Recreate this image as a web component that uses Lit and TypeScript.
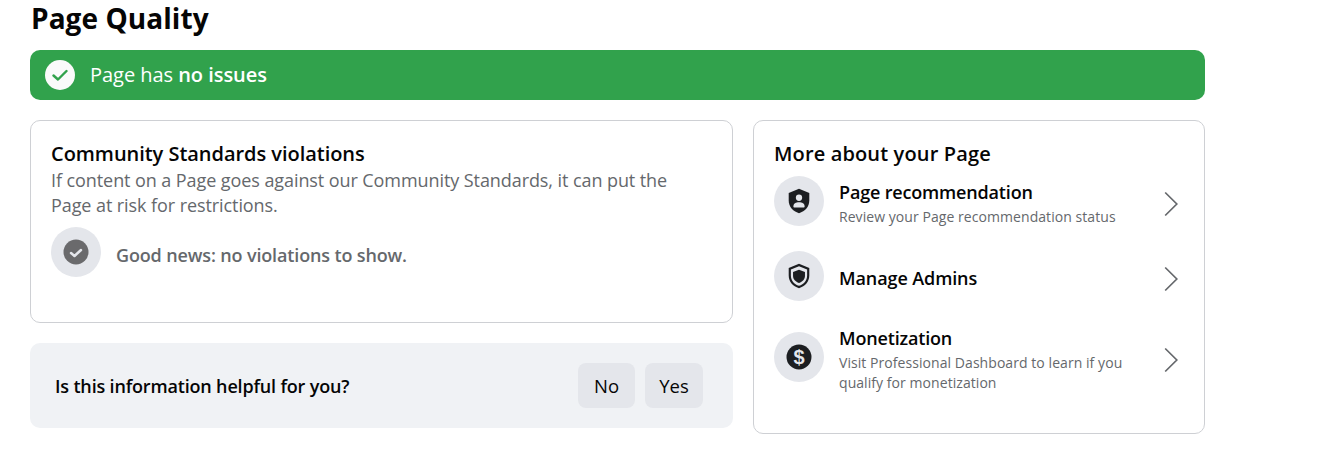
import { LitElement, html, css, svg } from "lit";
import { customElement } from "lit/decorators.js";

const chevron = html`<svg class="chev" width="14" height="26" viewBox="0 0 14 26"><path d="M1.200 1.500 L12.800 13 L1.200 24.500" fill="none" stroke="#65686c" stroke-width="1.700"/></svg>`;
const personShield = svg`<path fill="#1c1e21" d="M12 .8 21.500 4.500v7c0 5.600-3.800 9.900-9.500 11.700-5.700-1.800-9.500-6.100-9.500-11.700v-7z"/><circle cx="12" cy="9" r="2.900" fill="#e4e6eb"/><path fill="#e4e6eb" d="M6.800 17c0-2.600 2.300-3.800 5.200-3.800s5.200 1.200 5.200 3.800c0 .6-.4 1-1 1H7.800c-.6 0-1-.4-1-1z"/>`;
const plainShield = svg`<path fill="#1c1e21" fill-rule="evenodd" d="M12 .8 21.500 4.600v6.900c0 5.600-3.800 9.900-9.500 11.700-5.700-1.800-9.500-6.100-9.500-11.700V4.600zM12 3 4.500 6v5.500c0 4.500 3 8 7.500 9.600 4.500-1.600 7.500-5.100 7.500-9.600V6z"/><path fill="#1c1e21" d="M12 6.200 17.500 8.300v3.400c0 3.200-2.200 5.600-5.500 6.700-3.300-1.100-5.500-3.500-5.500-6.700V8.300z"/>`;

@customElement("app-root")
export class AppRoot extends LitElement {
  static styles = css`
    :host { display: block; width: 1317px; height: 457px; box-sizing: border-box; padding: 0 112px 0 30px; background: #fff; overflow: hidden;
      font-family: "Open Sans", "Noto Sans", sans-serif; color: #050505; }
    h1 { margin: -1px 0 0; font-size: 28px; line-height: 38px; font-weight: 700; height: 51px; padding-left: 1px; letter-spacing: 0.06px; }
    .banner { height: 50px; background: #31a24c; border-radius: 10px; display: flex; align-items: center; padding-left: 15px; gap: 15px; color: #fff; font-size: 20px; line-height: 26px; letter-spacing: -0.04px; }
    .banner b { font-weight: 600; }
    .tick { width: 30px; height: 30px; border-radius: 50%; background: #fafafa; display: flex; align-items: center; justify-content: center; }
    .cols { display: grid; grid-template-columns: 703px 452px; gap: 20px; margin-top: 20px; align-items: start; }
    .left { display: flex; flex-direction: column; gap: 20px; }
    .card { box-sizing: border-box; border: 1px solid #ced0d4; border-radius: 10px; padding: 20px; }
    .c1 { height: 203px; }
    .c2 { height: 314px; }
    h2 { margin: 0; font-size: 20px; font-weight: 600; line-height: 26px; letter-spacing: -0.04px; }
    .c2 h2 { letter-spacing: 0.14px; }
    p { margin: 0; font-size: 18px; line-height: 25px; color: #65686c; letter-spacing: -0.08px; }
    .c1 p { margin-top: 1px; width: 640px; }
    .good { display: flex; align-items: center; gap: 15px; margin-top: 9px; color: #65686c; font-size: 18px; font-weight: 600; letter-spacing: -0.14px; }
    .good span:last-child { margin-top: 5px; }
    .disc { width: 50px; height: 50px; border-radius: 50%; background: #e4e6eb; display: flex; align-items: center; justify-content: center; flex: none; }
    .feedback { height: 85px; background: #f0f2f5; border-radius: 10px; display: flex; align-items: center; justify-content: space-between; padding: 0 30px 0 25px; font-size: 18px; font-weight: 600; letter-spacing: -0.17px; }
    .btns { display: flex; gap: 10px; }
    button { height: 45px; border: 0; border-radius: 8px; background: #e4e6eb; font: inherit; font-weight: 500; color: #050505; padding: 0; letter-spacing: 0; font-size: 18.500px; }
    .no { width: 57px; } .yes { width: 58px; }
    .row { display: grid; grid-template-columns: 50px 1fr 14px; column-gap: 15px; align-items: start; height: 50px; margin-right: 6px; }
    .r1 { margin-top: 9px; }
    .r2 { margin-top: 25px; }
    .r3 { margin-top: 31px; }
    .chev { margin-top: 15px; }
    .r1 .text { margin-top: 4px; }
    .r2 .text { margin-top: 15px; }
    .r3 .text { margin-top: -6px; }
    .t { font-size: 18px; font-weight: 600; line-height: 24px; letter-spacing: -0.17px; }
    .r2 .t { letter-spacing: -0.1px; }
    .s { font-size: 14px; line-height: 20px; color: #65686c; margin-top: 3px; letter-spacing: 0.06px; }
    .r3 .s { width: 300px; }
  `;
  render() {
    return html`
      <h1>Page Quality</h1>
      <div class="banner">
        <span class="tick"><svg width="16" height="14" viewBox="0 0 16 14"><path d="M1.500 7.500 6 11.500 14.500 3" fill="none" stroke="#31a24c" stroke-width="2.400" stroke-linecap="round" stroke-linejoin="round"/></svg></span>
        <span>Page has <b>no issues</b></span>
      </div>
      <div class="cols">
        <div class="left">
          <section class="card c1">
            <h2>Community Standards violations</h2>
            <p>If content on a Page goes against our Community Standards, it can put the Page at risk for restrictions.</p>
            <div class="good">
              <span class="disc"><svg width="26" height="26" viewBox="0 0 26 26"><circle cx="13" cy="13" r="12.500" fill="#6a6a6c"/><path d="M8 14 11.500 17 18 11" fill="none" stroke="#e4e6eb" stroke-width="2.500" stroke-linecap="round" stroke-linejoin="round"/></svg></span>
              <span>Good news: no violations to show.</span>
            </div>
          </section>
          <section class="feedback">
            <span>Is this information helpful for you?</span>
            <div class="btns"><button class="no">No</button><button class="yes">Yes</button></div>
          </section>
        </div>
        <section class="card c2">
          <h2>More about your Page</h2>
          <div class="row r1">
            <span class="disc"><svg width="26" height="26" viewBox="0 0 24 24">${personShield}</svg></span>
            <div class="text"><div class="t">Page recommendation</div><div class="s">Review your Page recommendation status</div></div>
            ${chevron}
          </div>
          <div class="row r2">
            <span class="disc"><svg width="26" height="26" viewBox="0 0 24 24">${plainShield}</svg></span>
            <div class="text"><div class="t">Manage Admins</div></div>
            ${chevron}
          </div>
          <div class="row r3">
            <span class="disc"><svg width="26" height="26" viewBox="0 0 26 26"><circle cx="13" cy="13" r="12.500" fill="#1c1e21"/><text x="13" y="20" text-anchor="middle" font-family="Liberation Sans, sans-serif" font-weight="700" font-size="20" fill="#e4e6eb">$</text></svg></span>
            <div class="text"><div class="t">Monetization</div><div class="s">Visit Professional Dashboard to learn if you qualify for monetization</div></div>
            ${chevron}
          </div>
        </section>
      </div>`;
  }
}
